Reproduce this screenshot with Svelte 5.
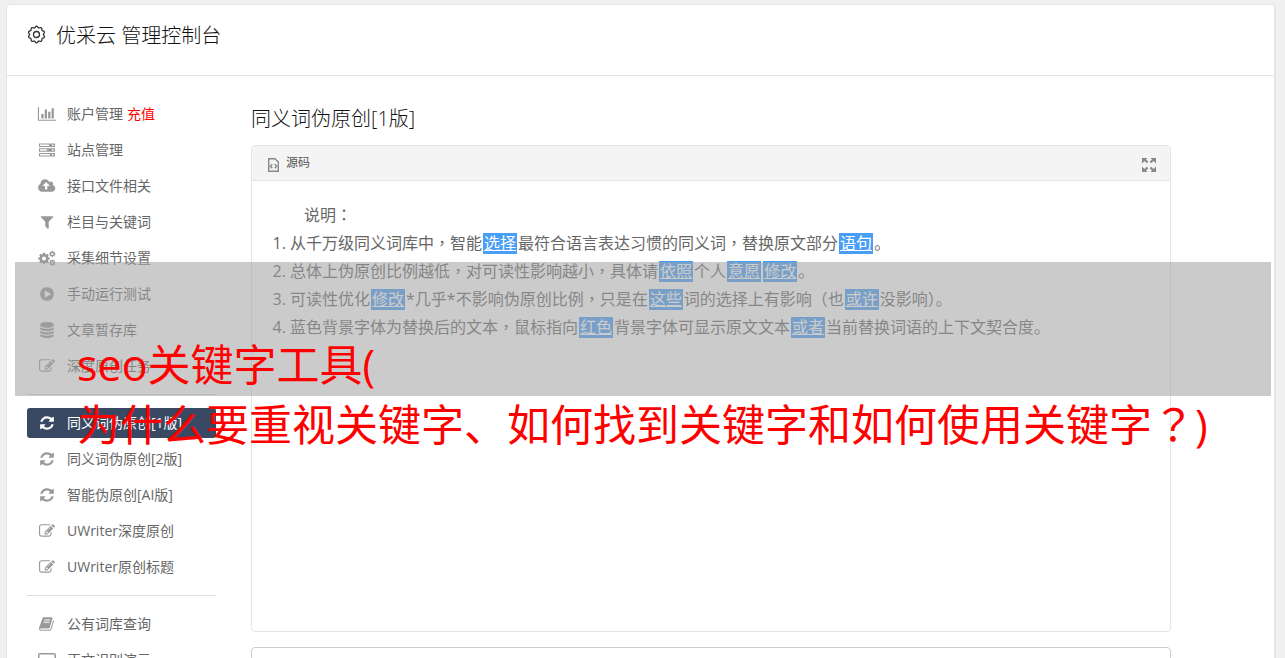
<script>
  const icons = {
    chart: {
      box: "0 0 2048 1792",
      d: "M640 896v512h-256v-512h256zm384-512v1024h-256v-1024h256zm1024 1152v128h-2048v-1536h128v1408h1920zm-640-896v768h-256v-768h256zm384-384v1152h-256v-1152h256z"
    },
    server: {
      box: "0 0 18 16",
      d: "M1 1.500h16v3.500h-16zm1 1v1.500h9v-1.500zm12 0v1.500h1.500v-1.500zM1 6.200h16v3.500h-16zm1 1v1.500h7v-1.500zm12 0v1.500h1.500v-1.500zM1 11h16v3.500h-16zm1 1v1.500h10v-1.500zm12 0v1.500h1.500v-1.500z"
    },
    cloud: {
      box: "0 0 1856 1792",
      d: "M1216 864q0-14-9-23l-352-352q-9-9-23-9t-23 9l-351 351q-10 12-10 24 0 14 9 23t23 9h224v352q0 13 9.5 22.5t22.5 9.5h192q13 0 22.5-9.5t9.5-22.5v-352h224q13 0 22.5-9.5t9.5-22.5zm640 288q0 159-112.5 271.5t-271.5 112.5h-1088q-185 0-316.5-131.5t-131.5-316.5q0-130 70-240t188-165q-2-30-2-43 0-212 150-362t362-150q156 0 285.5 87t188.5 231q71-62 166-62 106 0 181 75t75 181q0 76-41 138 130 31 213.5 135.5t83.5 238.5z"
    },
    filter: {
      box: "0 0 1792 1792",
      d: "M1595 295q17 41-14 70l-493 493v742q0 42-39 59-13 5-25 5-27 0-45-19l-256-256q-19-19-19-45v-486l-493-493q-31-29-14-70 17-39 59-39h1280q42 0 59 39z"
    },
    cogs: {
      box: "0 0 18 16",
      d: gear(6, 8.5, 5.8, 4.5, 2.1) + gear(14.3, 4, 3.2, 2.4, 1.1) + gear(14.3, 12.6, 3.2, 2.4, 1.1)
    },
    play: {
      box: "0 0 1792 1792",
      d: "M896 128q209 0 385.5 103t279.5 279.5 103 385.5-103 385.5-279.5 279.5-385.5 103-385.5-103-279.5-279.5-103-385.5 103-385.5 279.5-279.5 385.5-103zm384 823q32-18 32-55t-32-55l-544-320q-31-19-64-1-32 19-32 56v640q0 37 32 56 16 8 32 8 17 0 32-9z"
    },
    database: {
      box: "0 0 1792 1792",
      d: "M896 768q237 0 443-43t325-127v170q0 69-103 128t-280 93.5-385 34.5-385-34.5-280-93.5-103-128v-170q119 84 325 127t443 43zm0 768q237 0 443-43t325-127v170q0 69-103 128t-280 93.5-385 34.5-385-34.5-280-93.5-103-128v-170q119 84 325 127t443 43zm0-384q237 0 443-43t325-127v170q0 69-103 128t-280 93.5-385 34.5-385-34.5-280-93.5-103-128v-170q119 84 325 127t443 43zm0-1152q208 0 385 34.5t280 93.5 103 128v128q0 69-103 128t-280 93.5-385 34.5-385-34.5-280-93.5-103-128v-128q0-69 103-128t280-93.5 385-34.5z"
    },
    edit: {
      box: "0 0 1792 1792",
      d: "M888 1184l116-116-152-152-116 116v56h96v96h56zm440-720q-16-16-33 1l-350 350q-17 17-1 33t33-1l350-350q17-17 1-33zm80 594v190q0 119-84.5 203.5t-203.5 84.5h-832q-119 0-203.5-84.5t-84.5-203.5v-832q0-119 84.5-203.5t203.5-84.5h832q63 0 117 25 15 7 18 23 3 17-9 29l-49 49q-14 14-32 8-23-6-45-6h-832q-66 0-113 47t-47 113v832q0 66 47 113t113 47h832q66 0 113-47t47-113v-126q0-13 9-22l64-64q15-15 35-7t20 29zm-96-738l288 288-672 672h-288v-288zm444 132l-92 92-288-288 92-92q28-28 68-28t68 28l152 152q28 28 28 68t-28 68z"
    },
    refresh: {
      box: "0 0 1792 1792",
      d: "M1639 1056q0 5-1 7-64 268-268 434.5t-478 166.5q-146 0-282.5-55t-243.5-157l-129 129q-19 19-45 19t-45-19-19-45v-448q0-26 19-45t45-19h448q26 0 45 19t19 45-19 45l-137 137q71 66 161 102t187 36q134 0 250-65t186-179q11-17 53-117 8-23 30-23h192q13 0 22.5 9.5t9.5 22.5zm25-800v448q0 26-19 45t-45 19h-448q-26 0-45-19t-19-45 19-45l138-138q-148-137-349-137-134 0-250 65t-186 179q-11 17-53 117-8 23-30 23h-199q-13 0-22.5-9.5t-9.5-22.5v-7q65-268 270-434.5t480-166.5q146 0 284 55.5t245 156.5l130-129q19-19 45-19t45 19 19 45z"
    },
    book: {
      box: "0 0 1792 1792",
      d: "M1639 478q40 57 18 129l-275 906q-19 64-76.5 107.5t-122.5 43.5h-923q-77 0-148.5-53.5t-99.5-131.5q-24-67-2-127 0-4 3-27t4-37q1-8-3-21.5t-3-19.5q2-11 8-21t16.5-23.5 16.5-23.5q23-38 45-91.5t30-91.5q3-10 .5-30t-.5-28q3-11 17-28t17-23q21-36 42-92t25-90q1-9-2.5-32t.5-28q4-13 22-30.5t22-22.5q19-26 42.5-84.5t27.5-96.5q1-8-3-25.5t-2-26.5q2-8 9-18t18-23 17-21q8-12 16.5-30.5t15-35 16-36 19.5-32 26.5-23.5 36-11.5 47.5 5.5l-1 3q38-9 51-9h761q74 0 114 56t18 130l-274 906q-36 119-71.5 153.5t-128.5 34.5h-869q-27 0-38 15-11 16-1 43 24 70 144 70h923q29 0 56-15.5t35-41.5l300-987q7-22 5-57 38 15 59 43zm-1064 2q-4 13 2 22.5t20 9.5h608q13 0 25.5-9.5t16.5-22.5l21-64q4-13-2-22.5t-20-9.5h-608q-13 0-25.5 9.5t-16.5 22.5zm-83 256q-4 13 2 22.5t20 9.5h608q13 0 25.5-9.5t16.5-22.5l21-64q4-13-2-22.5t-20-9.5h-608q-13 0-25.5 9.5t-16.5 22.5z"
    },
    laptop: {
      box: "0 0 18 16",
      d: "M2 1h14a2 2 0 0 1 2 2v10h-18v-10a2 2 0 0 1 2-2zm-.5 1.5v9h15v-9zM0 14h18v2h-18z"
    }
  };

  const groups = [
    [
      { icon: "chart", label: "账户管理", extra: "充值" },
      { icon: "server", label: "站点管理" },
      { icon: "cloud", label: "接口文件相关" },
      { icon: "filter", label: "栏目与关键词" },
      { icon: "cogs", label: "采集细节设置" },
      { icon: "play", label: "手动运行测试" },
      { icon: "database", label: "文章暂存库" },
      { icon: "edit", label: "深度原创任务" }
    ],
    [
      { icon: "refresh", label: "同义词伪原创[1版]", active: true },
      { icon: "refresh", label: "同义词伪原创[2版]" },
      { icon: "refresh", label: "智能伪原创[AI版]" },
      { icon: "edit", label: "UWriter深度原创" },
      { icon: "edit", label: "UWriter原创标题" }
    ],
    [
      { icon: "book", label: "公有词库查询" },
      { icon: "laptop", label: "正文识别演示" }
    ]
  ];

  // odd entries are the replaced words
  const lines = [
    ["从千万级同义词库中，智能", "选择", "最符合语言表达习惯的同义词，替换原文部分", "语句", "。"],
    ["总体上伪原创比例越低，对可读性影响越小，具体请", "依照", "个人", "意愿", "", "修改", "。"],
    ["可读性优化", "修改", "*几乎*不影响伪原创比例，只是在", "这些", "词的选择上有影响（也", "或许", "没影响）。"],
    ["蓝色背景字体为替换后的文本，鼠标指向", "红色", "背景字体可显示原文文本", "或者", "当前替换词语的上下文契合度。"]
  ];

  // toothed ring with a round hole, eight teeth
  function gear(cx, cy, outer, inner, hole) {
    let d = "";
    for (let i = 0; i < 8; i++) {
      [[-0.3, inner], [-0.17, outer], [0.17, outer], [0.3, inner]].forEach(([off, r]) => {
        const a = (i * Math.PI) / 4 + off;
        d += (d ? "L" : "M") + (cx + r * Math.cos(a)).toFixed(2) + " " + (cy + r * Math.sin(a)).toFixed(2);
      });
    }
    return d + `ZM${cx - hole} ${cy}a${hole} ${hole} 0 1 0 ${hole * 2} 0a${hole} ${hole} 0 1 0 ${-hole * 2} 0Z`;
  }

  // soft outline for the header cog
  function wave(c, radius, depth) {
    let d = "";
    for (let i = 0; i < 100; i++) {
      const a = (i * Math.PI) / 50;
      const r = radius + depth * Math.cos(10 * a);
      d += (d ? "L" : "M") + (c + r * Math.sin(a)).toFixed(2) + " " + (c + r * Math.cos(a)).toFixed(2);
    }
    return d + "Z";
  }
</script>

<style>
  :global(body) {
    margin: 0;
    background-color: #f0f0f0;
  }
  .page {
    box-sizing: border-box;
    height: 100vh;
    overflow: hidden;
    padding: 4px 9px 0 6px;
    position: relative;
    font-family: "Open Sans", "Noto Sans CJK SC", sans-serif;
    font-size: 14px;
    line-height: 20px;
    color: #666;
  }
  .card {
    background-color: #fff;
    border: 1px solid #e5e5e5;
    border-right-width: 2px;
    border-radius: 4px;
    min-height: 100vh;
  }
  header {
    display: flex;
    align-items: center;
    gap: 10px;
    padding: 16px 20px 24px;
    border-bottom: 1px solid #e5e5e5;
  }
  header svg {
    width: 19px;
    height: 19px;
    margin-bottom: 4px;
  }
  h1,
  h2 {
    margin: 0;
    font-size: 20px;
    font-weight: 300;
    line-height: 30px;
    color: #111;
  }
  .columns {
    display: flex;
    align-items: flex-start;
    gap: 35px;
    padding: 23px 20px;
  }
  nav {
    flex: 0 0 189px;
  }
  ul {
    list-style: none;
    margin: 0;
    padding: 0;
    display: flex;
    flex-direction: column;
    gap: 6px;
  }
  ul + ul {
    margin-top: 13px;
    padding-top: 13px;
    border-top: 1px solid #ddd;
  }
  nav a {
    display: flex;
    align-items: center;
    padding: 5px 10px;
    border-radius: 3px;
    color: #666;
    text-decoration: none;
  }
  nav a svg {
    width: 20px;
    height: 16px;
    margin-right: 10px;
    fill: #999;
  }
  nav a.active {
    background-color: #394963;
    color: #fff;
  }
  nav a.active svg {
    fill: #fff;
  }
  .extra {
    margin-left: 4px;
    color: #f00;
  }
  main {
    flex: 1;
    max-width: 920px;
    padding-top: 5px;
  }
  .editor {
    box-sizing: border-box;
    min-height: 487px;
    margin: 11px 0 15px;
    border: 1px solid #e5e5e5;
    border-radius: 4px;
  }
  .toolbar {
    display: flex;
    justify-content: space-between;
    padding: 7px 13px 7px 15px;
    background-color: #f4f4f4;
    border-bottom: 1px solid #e5e5e5;
    border-radius: 3px 3px 0 0;
  }
  .toolbar button {
    display: flex;
    align-items: center;
    gap: 6px;
    padding: 0;
    border: 0;
    background: none;
    font: inherit;
    font-size: 12px;
    color: #555;
    cursor: pointer;
  }
  .toolbar svg {
    height: 16px;
    margin-top: 3px;
  }
  .content {
    padding: 20px;
    font-size: 16px;
    line-height: 28px;
  }
  .content p {
    margin: 0;
    text-indent: 32px;
  }
  ol {
    margin: 0;
    padding-left: 18px;
  }
  mark {
    display: inline-block;
    margin: 0 1px;
    padding: 0 1px;
    line-height: 21px;
    background-color: #489ef7;
    color: #fff;
    text-decoration: underline;
  }
  /* centred full-width punctuation */
  .punct {
    font-family: "Open Sans", "Noto Sans CJK TC", sans-serif;
  }
  textarea {
    box-sizing: border-box;
    display: block;
    width: 100%;
    height: 120px;
    border: 1px solid #ccc;
    border-radius: 4px;
    resize: none;
  }
  .caption {
    position: absolute;
    top: 262px;
    left: 15px;
    right: 14px;
    box-sizing: border-box;
    height: 134px;
    padding: 73px 0 0 62px;
    background-color: rgba(160, 160, 160, 0.55);
    color: #f00;
    font-size: 43px;
    line-height: 60px;
    white-space: nowrap;
  }
</style>

{#snippet prose(text)}
  {#each text.split(/([，：？（）])/) as bit, i}{#if i % 2}<span class="punct" lang="zh-Hant">{bit}</span>{:else}{bit}{/if}{/each}
{/snippet}

<div class="page">
  <div class="card">
    <header>
      <svg viewBox="0 0 19 19" fill="none" stroke="#333" stroke-width="1.3">
        <path d={wave(9.5, 7.6, 0.7)} />
        <circle cx="9.5" cy="9.5" r="3" />
      </svg>
      <h1>优采云 管理控制台</h1>
    </header>
    <div class="columns">
      <nav>
        {#each groups as group}
          <ul>
            {#each group as item}
              <li>
                <a href="#top" class:active={item.active}>
                  <svg viewBox={icons[item.icon].box}>
                    <path fill-rule="evenodd" d={icons[item.icon].d} />
                  </svg>
                  {item.label}
                  {#if item.extra}<span class="extra">{item.extra}</span>{/if}
                </a>
              </li>
            {/each}
          </ul>
        {/each}
      </nav>
      <main>
        <h2>同义词伪原创[1版]</h2>
        <div class="editor">
          <div class="toolbar">
            <button type="button">
              <svg width="13" viewBox="0 0 13 16" fill="none" stroke="#888" stroke-width="1.4">
                <path d="M1.7 1.7h6.3l3.3 3.3v9.3h-9.6z" />
                <path d="M5.3 7.2L3.3 9.2l2 2M7.7 7.2l2 2-2 2" />
              </svg>
              源码
            </button>
            <button type="button" aria-label="全屏">
              <svg width="16" viewBox="0 0 16 16" fill="#888">
                <path d="M1 1h5.500L5 2.500l2.300 2.300-1.500 1.500L3.500 4 1 6.500zM15 1v5.500L12.500 4l-2.300 2.300-1.500-1.500L11 2.500 9.500 1zM1 15v-5.500L3.500 12l2.300-2.300 1.500 1.500L5 13.500 6.500 15zM15 15h-5.500L11 13.500l-2.300-2.300 1.500-1.500L12.500 12 15 9.500z" />
              </svg>
            </button>
          </div>
          <div class="content">
            <p>{@render prose("说明：")}</p>
            <ol>
              {#each lines as line}
                <li>{#each line as part, i}{#if i % 2}<mark>{part}</mark>{:else}{@render prose(part)}{/if}{/each}</li>
              {/each}
            </ol>
          </div>
        </div>
        <textarea aria-label="结果"></textarea>
      </main>
    </div>
  </div>
  <div class="caption">
    {@render prose("seo关键字工具(")}<br />
    {@render prose("为什么要重视关键字、如何找到关键字和如何使用关键字？)")}
  </div>
</div>
